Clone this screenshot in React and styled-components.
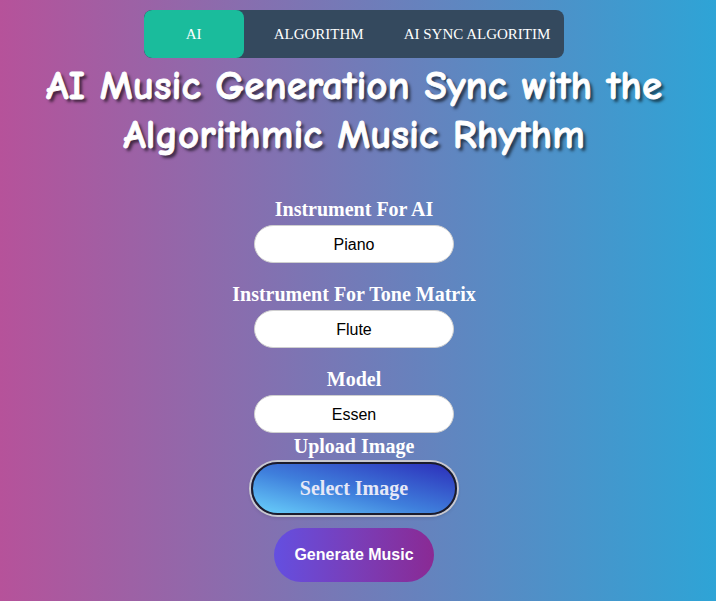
import React, { useState } from "react";
import styled, { createGlobalStyle } from "styled-components";

const GlobalStyle = createGlobalStyle`
    html, body {
        margin: 0;
        padding: 0;
        height: 100%;
    }
    body {
        background: linear-gradient(to right, #b6529a 0%, #2ea4d6 100%);
        font-family: "Liberation Serif", serif;
    }
    #root {
        min-height: 100%;
    }
`;

const Page = styled.div`
    display: flex;
    flex-direction: column;
    align-items: center;
    padding: 10px 8px 0 0;
    min-height: 601px;
    box-sizing: border-box;
`;

const TabBar = styled.div`
    display: flex;
    height: 48px;
    background: #34495e;
    border-radius: 8px;
    overflow: hidden;
`;

const Tab = styled.button`
    border: none;
    border-radius: 8px;
    height: 100%;
    cursor: pointer;
    font-family: "Liberation Serif", serif;
    font-size: 15px;
    color: #ffffff;
    background: ${(p) => (p.active ? "#1abc9c" : "transparent")};
    width: ${(p) => p.width || "auto"};
    padding: ${(p) => p.pad || "0"};
`;

const Title = styled.h1`
    margin: 3px 0 0;
    text-align: center;
    color: #ffffff;
    font-family: "Comic Neue", "Lato", sans-serif;
    font-weight: 700;
    font-size: 41px;
    line-height: 49px;
    -webkit-text-stroke: 0.8px #ffffff;
    text-shadow: 3px 3px 3px rgba(0, 0, 0, 0.6);
`;

const Form = styled.div`
    display: flex;
    flex-direction: column;
    align-items: center;
    margin-top: 39px;
`;

const Label = styled.label`
    font-family: "Liberation Serif", serif;
    font-weight: 700;
    font-size: 20px;
    color: #ffffff;
    line-height: 22px;
    margin-top: ${(p) => p.top || "0"};
    margin-bottom: ${(p) => p.bottom || "5px"};
`;

const Select = styled.select`
    appearance: none;
    -webkit-appearance: none;
    box-sizing: border-box;
    width: 200px;
    height: 38px;
    border-radius: 19px;
    border: 1px solid #cfcfcf;
    background: #ffffff;
    font-family: "Liberation Sans", Arial, sans-serif;
    font-size: 16px;
    color: #000000;
    text-align: center;
    text-align-last: center;
    outline: none;
`;

const UploadButton = styled.label`
    display: flex;
    align-items: center;
    justify-content: center;
    box-sizing: border-box;
    width: 206px;
    height: 53px;
    border-radius: 27px;
    border: 2px solid #1c1c2c;
    box-shadow: 0 0 0 2px #c8c8d0, 0 2px 4px rgba(0, 0, 0, 0.2);
    background: linear-gradient(to top right, #69d0fb 0%, #3f7fdc 45%, #2c2eba 100%);
    font-family: "Liberation Serif", serif;
    font-weight: 700;
    font-size: 20px;
    color: #e6e8f7;
    cursor: pointer;
`;

const HiddenInput = styled.input`
    display: none;
`;

const GenerateButton = styled.button`
    margin-top: 13px;
    width: 160px;
    height: 54px;
    border: none;
    border-radius: 27px;
    background: linear-gradient(to right, #644fe0 0%, #7b3cb5 55%, #8a2a94 100%);
    font-family: "Liberation Sans", Arial, sans-serif;
    font-weight: 700;
    font-size: 16px;
    color: #ffffff;
    cursor: pointer;
`;

const App = () => {
    const [tab, setTab] = useState("ai");

    return (
        <>
            <GlobalStyle />
            <Page>
                <TabBar>
                    <Tab active={tab === "ai"} width="100px" onClick={() => setTab("ai")}>AI</Tab>
                    <Tab active={tab === "algo"} pad="0 20px 0 30px" onClick={() => setTab("algo")}>ALGORITHM</Tab>
                    <Tab active={tab === "sync"} pad="0 14px 0 20px" onClick={() => setTab("sync")}>AI SYNC ALGORITIM</Tab>
                </TabBar>
                <Title>
                    AI Music Generation Sync with the<br />
                    Algorithmic Music Rhythm
                </Title>
                <Form>
                    <Label>Instrument For AI</Label>
                    <Select defaultValue="Piano">
                        <option>Piano</option>
                        <option>Guitar</option>
                        <option>Violin</option>
                    </Select>
                    <Label top="20px">Instrument For Tone Matrix</Label>
                    <Select defaultValue="Flute">
                        <option>Flute</option>
                        <option>Piano</option>
                        <option>Synth</option>
                    </Select>
                    <Label top="20px">Model</Label>
                    <Select defaultValue="Essen">
                        <option>Essen</option>
                        <option>Nottingham</option>
                    </Select>
                    <Label top="2px" bottom="5px">Upload Image</Label>
                    <UploadButton htmlFor="upload-image">Select Image</UploadButton>
                    <HiddenInput id="upload-image" type="file" accept="image/*" />
                    <GenerateButton>Generate Music</GenerateButton>
                </Form>
            </Page>
        </>
    );
};

export default App;
